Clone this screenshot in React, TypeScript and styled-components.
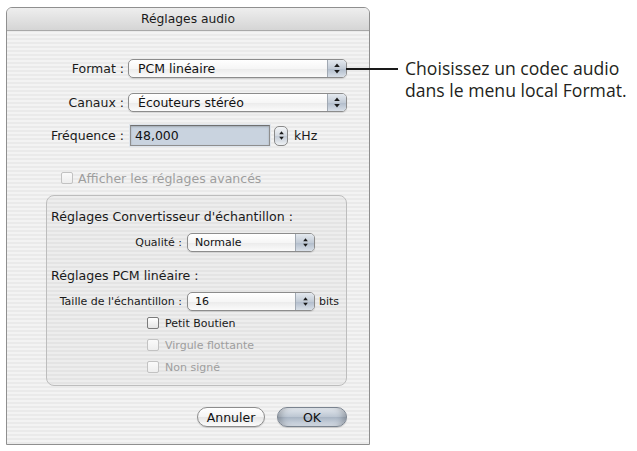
import React, { FC } from "react";
import styled, { createGlobalStyle } from "styled-components";

const GlobalStyle = createGlobalStyle`
  html, body {
    margin: 0;
    background: #fff;
  }
  body {
    font-family: "DejaVu Sans", "Liberation Sans", sans-serif;
    color: #111;
  }
`;

const Page = styled.div`
  display: flex;
  align-items: flex-start;
  width: 637px;
  height: 451px;
  box-sizing: border-box;
  padding: 7px 0 0 6px;
`;

const Window = styled.div`
  width: 364px;
  height: 438px;
  box-sizing: border-box;
  border: 1px solid #8f8f8f;
  border-radius: 6px 6px 0 0;
  display: flex;
  flex-direction: column;
  background: repeating-linear-gradient(180deg, #f3f3f3 0 2px, #eaeaea 2px 4px);
`;

const TitleBar = styled.div`
  height: 22px;
  flex: none;
  display: flex;
  align-items: center;
  justify-content: center;
  border-radius: 5px 5px 0 0;
  background: linear-gradient(#eeeeee, #d5d5d5);
  border-bottom: 1px solid #a8a8a8;
  font-size: 12.3px;
  color: #1a1a1a;
`;

const Body = styled.div`
  display: flex;
  flex-direction: column;
  flex: 1;
`;

const Row = styled.div<{ $top: number; $h?: number; $indent?: number }>`
  display: flex;
  align-items: center;
  margin-top: ${(p) => p.$top}px;
  height: ${(p) => p.$h ?? 19}px;
  padding-left: ${(p) => p.$indent ?? 0}px;
`;

const Label = styled.span<{ $w: number; $small?: boolean }>`
  width: ${(p) => p.$w}px;
  flex: none;
  box-sizing: border-box;
  padding-right: ${(p) => (p.$small ? 5 : 4)}px;
  text-align: right;
  white-space: nowrap;
  font-size: ${(p) => (p.$small ? 11 : 12.5)}px;
  color: #1a1a1a;
`;

const Unit = styled.span<{ $small?: boolean }>`
  margin-left: ${(p) => (p.$small ? 4 : 6)}px;
  font-size: ${(p) => (p.$small ? 11 : 12.5)}px;
  color: #1a1a1a;
`;

const PopupBox = styled.div<{ $w: number }>`
  position: relative;
  width: ${(p) => p.$w}px;
  height: 19px;
  box-sizing: border-box;
  border: 1px solid #8c8c8c;
  border-radius: 5px;
  background: linear-gradient(#ffffff, #f6f6f6 50%, #ebebeb 52%, #fbfbfb);
  box-shadow: 0 1px 1px rgba(0, 0, 0, 0.12);
  display: flex;
  align-items: center;
`;

const PopupText = styled.span<{ $small?: boolean }>`
  flex: 1;
  padding-left: ${(p) => (p.$small ? 7 : 9)}px;
  font-size: ${(p) => (p.$small ? 11 : 12.5)}px;
  white-space: nowrap;
`;

const PopupArrows = styled.div`
  width: 18px;
  align-self: stretch;
  border-left: 1px solid #a1a9b3;
  border-radius: 0 4px 4px 0;
  background: linear-gradient(#e4e9ef, #c3ccd7 50%, #b1bccb 52%, #d9e0e8);
  display: flex;
  align-items: center;
  justify-content: center;
`;

const Leader = styled.span`
  position: absolute;
  left: 100%;
  top: 8px;
  width: 52px;
  height: 1.5px;
  background: #1a1a1a;
`;

const TextField = styled.div`
  width: 140px;
  height: 21px;
  margin-left: 2px;
  box-sizing: border-box;
  border: 1px solid #8e8e8e;
  border-top-color: #707070;
  background: #c9d3df;
  box-shadow: inset 0 1px 2px rgba(0, 0, 0, 0.2), 0 0 0 1px #dfe5ec;
  display: flex;
  align-items: center;
  padding-left: 4px;
  font-size: 12.5px;
`;

const Stepper = styled.div`
  width: 14px;
  height: 20px;
  margin-left: 4px;
  box-sizing: border-box;
  border: 1px solid #8a8a8a;
  border-radius: 5px;
  background: linear-gradient(#f4f6f8, #d3d9e1 50%, #c4ccd7 52%, #eef1f4);
  display: flex;
  align-items: center;
  justify-content: center;
`;

const Check = styled.span<{ $disabled?: boolean }>`
  width: 12px;
  height: 12px;
  flex: none;
  box-sizing: border-box;
  border: 1px solid ${(p) => (p.$disabled ? "#c2c2c2" : "#7b7b7b")};
  border-radius: 2px;
  background: ${(p) =>
    p.$disabled ? "linear-gradient(#fafafa, #eeeeee)" : "linear-gradient(#ffffff, #e4e4e4)"};
`;

const CheckText = styled.span<{ $disabled?: boolean; $small?: boolean }>`
  margin-left: ${(p) => (p.$small ? 6 : 5)}px;
  font-size: ${(p) => (p.$small ? 11 : 12.5)}px;
  color: ${(p) => (p.$disabled ? "#9e9e9e" : "#1a1a1a")};
  white-space: nowrap;
`;

const Group = styled.div`
  margin: 9px 0 0 39px;
  width: 301px;
  height: 191px;
  box-sizing: border-box;
  border: 1px solid #bdbdbd;
  border-radius: 8px;
  background: rgba(0, 0, 0, 0.025);
  display: flex;
  flex-direction: column;
  padding-top: 13px;
`;

const Heading = styled.div<{ $top?: number }>`
  margin: ${(p) => p.$top ?? 0}px 0 0 4px;
  height: 16px;
  line-height: 16px;
  font-size: 12.6px;
  color: #1a1a1a;
  white-space: nowrap;
`;

const ButtonBar = styled.div`
  display: flex;
  justify-content: flex-end;
  gap: 12px;
  margin-top: 21px;
  padding-right: 22px;
`;

const PushButton = styled.button<{ $default?: boolean; $w: number }>`
  width: ${(p) => p.$w}px;
  height: 20px;
  padding: 0;
  border-radius: 10px;
  font-family: inherit;
  font-size: 12.5px;
  color: #111;
  border: 1px solid ${(p) => (p.$default ? "#7a838f" : "#8c8c8c")};
  background: ${(p) =>
    p.$default
      ? "linear-gradient(#e2e7ed, #bcc6d2 50%, #a9b5c4 52%, #d6dde6)"
      : "linear-gradient(#ffffff, #f4f4f4 50%, #e6e6e6 52%, #fbfbfb)"};
  box-shadow: ${(p) =>
    p.$default
      ? "inset 7px 0 6px -4px rgba(0,0,0,0.22), inset -7px 0 6px -4px rgba(0,0,0,0.22), 0 1px 1px rgba(0,0,0,0.15)"
      : "0 1px 1px rgba(0,0,0,0.15)"};
`;

const Callout = styled.div`
  margin: 50px 0 0 35px;
  font-family: "Open Sans", "Liberation Sans", sans-serif;
  font-size: 17.6px;
  line-height: 22px;
  color: #231f20;
  white-space: nowrap;
`;

const UpDown: FC<{ w?: number }> = ({ w = 6 }) => (
  <svg width={w} height={11} viewBox="0 0 6 11">
    <path d="M3 0.5 L5.8 4 L0.2 4 Z" fill="#1a1a1a" />
    <path d="M0.2 7 L5.8 7 L3 10.5 Z" fill="#1a1a1a" />
  </svg>
);

const Popup: FC<{ w: number; text: string; small?: boolean; leader?: boolean }> = ({
  w,
  text,
  small,
  leader,
}) => (
  <PopupBox $w={w}>
    <PopupText $small={small}>{text}</PopupText>
    <PopupArrows>
      <UpDown w={small ? 5 : 6} />
    </PopupArrows>
    {leader && <Leader />}
  </PopupBox>
);

const CheckRow: FC<{ top: number; indent: number; text: string; disabled?: boolean; small?: boolean }> = ({
  top,
  indent,
  text,
  disabled,
  small,
}) => (
  <Row $top={top} $h={16} $indent={indent}>
    <Check $disabled={disabled} />
    <CheckText $disabled={disabled} $small={small}>
      {text}
    </CheckText>
  </Row>
);

const App: FC = () => (
  <>
    <GlobalStyle />
    <Page>
      <Window>
        <TitleBar>Réglages audio</TitleBar>
        <Body>
          <Row $top={28}>
            <Label $w={121}>Format :</Label>
            <Popup w={219} text="PCM linéaire" leader />
          </Row>
          <Row $top={15}>
            <Label $w={121}>Canaux :</Label>
            <Popup w={219} text="Écouteurs stéréo" />
          </Row>
          <Row $top={13} $h={21}>
            <Label $w={121}>Fréquence :</Label>
            <TextField>48,000</TextField>
            <Stepper>
              <UpDown w={5} />
            </Stepper>
            <Unit>kHz</Unit>
          </Row>
          <CheckRow top={24} indent={54} text="Afficher les réglages avancés" disabled />

          <Group>
            <Heading>Réglages Convertisseur d'échantillon :</Heading>
            <Row $top={8}>
              <Label $w={140} $small>
                Qualité :
              </Label>
              <Popup w={128} text="Normale" small />
            </Row>
            <Heading $top={16}>Réglages PCM linéaire :</Heading>
            <Row $top={8}>
              <Label $w={140} $small>
                Taille de l'échantillon :
              </Label>
              <Popup w={128} text="16" small />
              <Unit $small>bits</Unit>
            </Row>
            <CheckRow top={4} indent={100} text="Petit Boutien" small />
            <CheckRow top={6} indent={100} text="Virgule flottante" small disabled />
            <CheckRow top={6} indent={100} text="Non signé" small disabled />
          </Group>

          <ButtonBar>
            <PushButton $w={68}>Annuler</PushButton>
            <PushButton $w={70} $default>
              OK
            </PushButton>
          </ButtonBar>
        </Body>
      </Window>
      <Callout>
        Choisissez un codec audio
        <br />
        dans le menu local Format.
      </Callout>
    </Page>
  </>
);

export default App;
